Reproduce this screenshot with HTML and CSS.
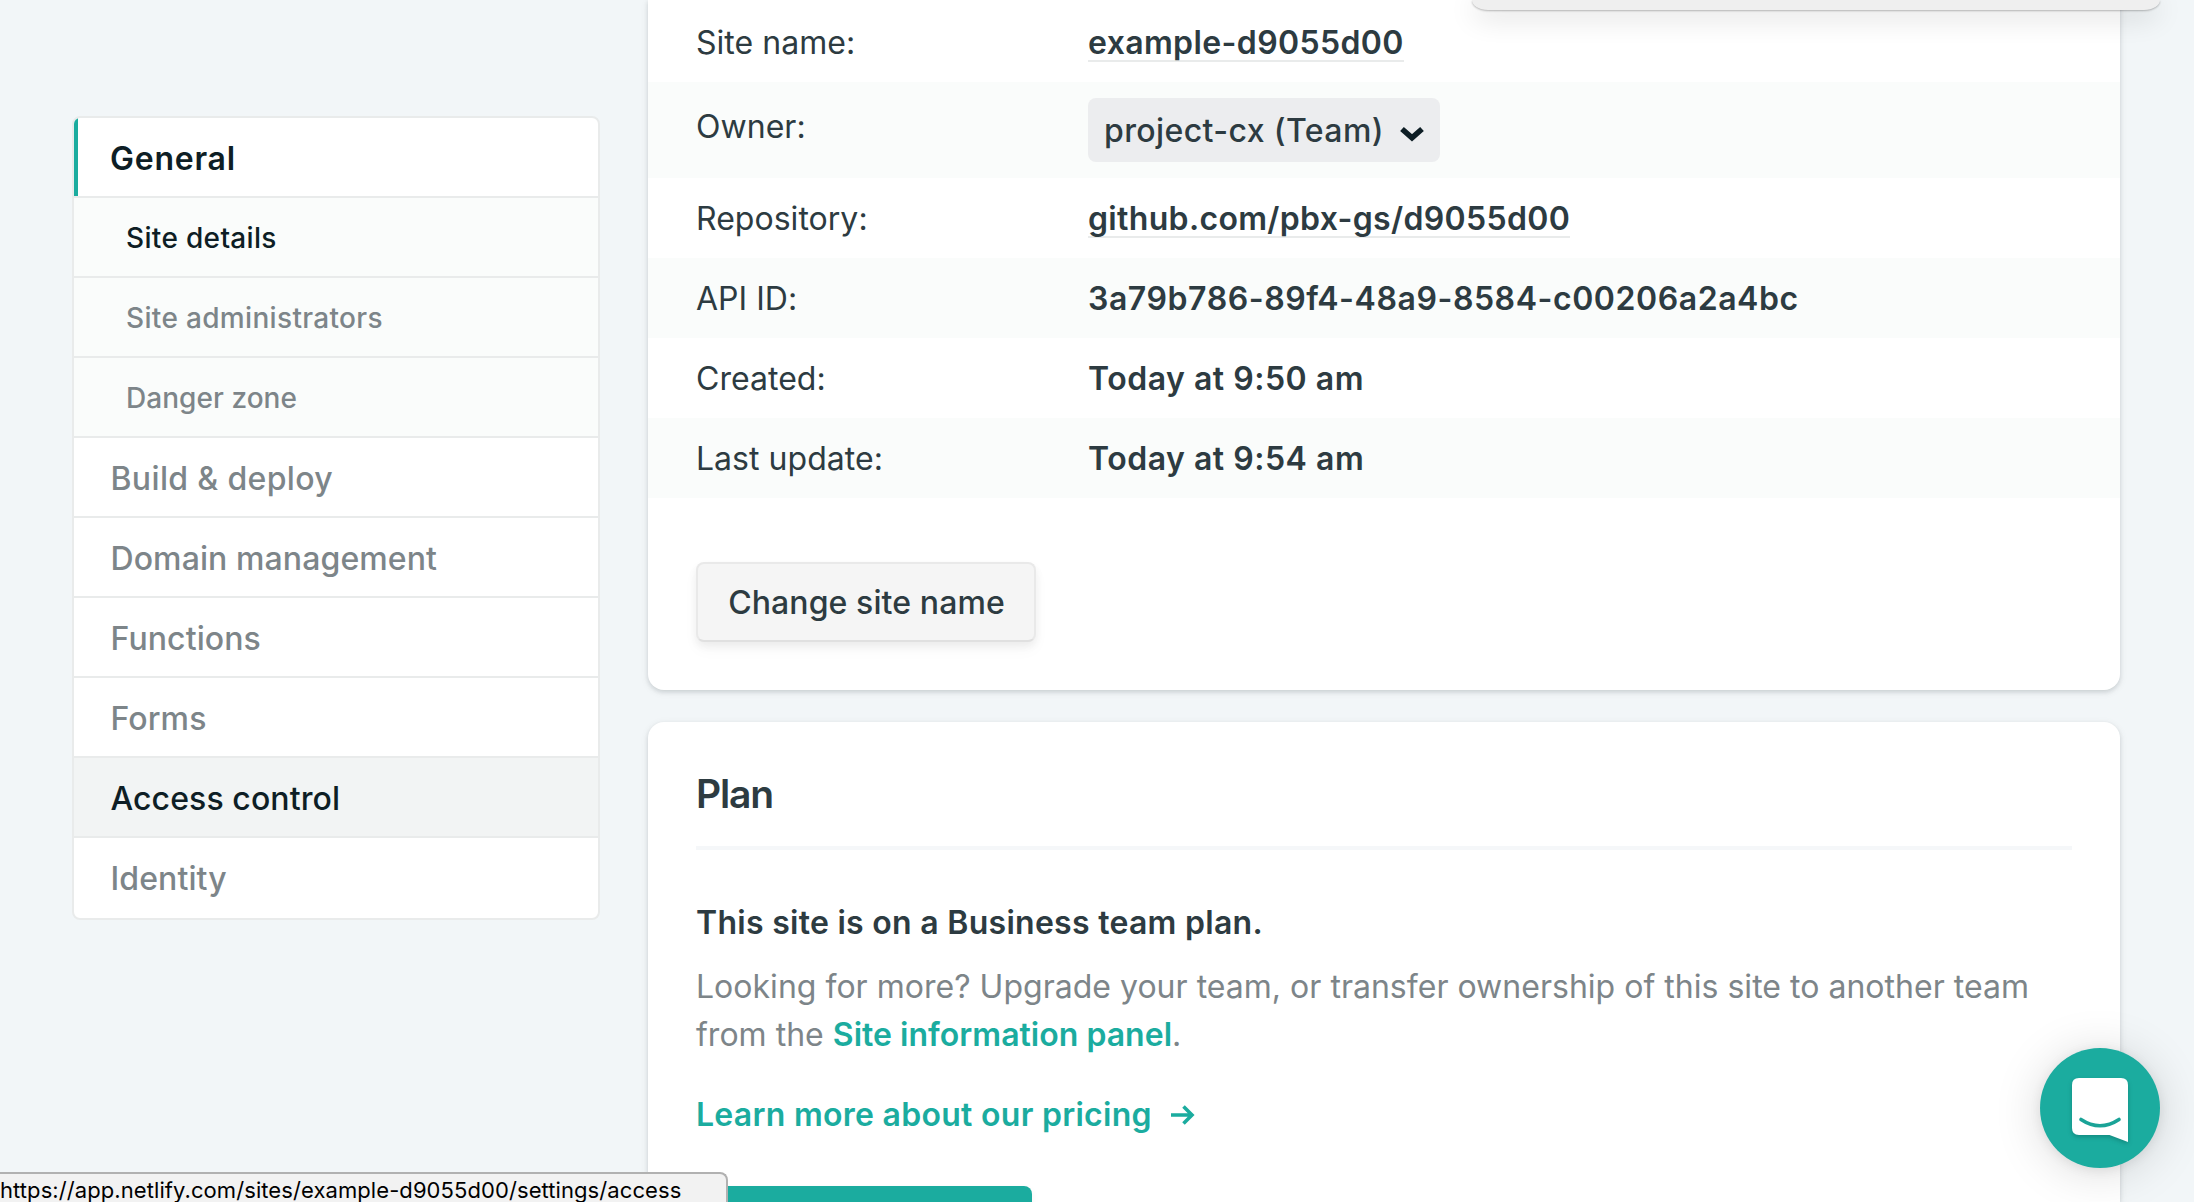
FILE: index.html
```html
<!DOCTYPE html>
<html lang="en">
<head>
<meta charset="utf-8">
<title>Site settings</title>
<link rel="stylesheet" href="styles.css">
</head>
<body>
<div class="page">
  <nav class="sidebar">
    <a class="nav-item nav-current">General</a>
    <a class="nav-item nav-sub nav-active">Site details</a>
    <a class="nav-item nav-sub">Site administrators</a>
    <a class="nav-item nav-sub nav-danger">Danger zone</a>
    <a class="nav-item nav-build">Build &amp; deploy</a>
    <a class="nav-item">Domain management</a>
    <a class="nav-item">Functions</a>
    <a class="nav-item">Forms</a>
    <a class="nav-item nav-hover">Access control</a>
    <a class="nav-item">Identity</a>
  </nav>
  <main class="content">
    <section class="card card-details">
      <dl class="details">
        <div class="row"><dt>Site name:</dt><dd><a class="underlined">example-d9055d00</a></dd></div>
        <div class="row row-owner"><dt>Owner:</dt><dd><button class="select"><span>project-cx (Team)</span><svg class="chevron" width="24" height="16" viewBox="0 0 24 16"><path d="M2 3 L12 11.8 L22 3" fill="none" stroke="#0e1e25" stroke-width="5.6"/></svg></button></dd></div>
        <div class="row"><dt>Repository:</dt><dd><a class="underlined repo">github.com/pbx-gs/d9055d00</a></dd></div>
        <div class="row"><dt>API ID:</dt><dd class="api-id">3a79b786-89f4-48a9-8584-c00206a2a4bc</dd></div>
        <div class="row"><dt>Created:</dt><dd>Today at 9:50 am</dd></div>
        <div class="row"><dt>Last update:</dt><dd>Today at 9:54 am</dd></div>
      </dl>
      <button class="btn">Change site name</button>
    </section>
    <section class="card card-plan">
      <h2 class="card-title">Plan</h2>
      <p class="plan-name">This site is on a Business team plan.</p>
      <p class="plan-text">Looking for more? Upgrade your team, or transfer ownership of this site to another team<br>from the <a class="link">Site information panel</a>.</p>
      <a class="link learn">Learn more about our pricing<svg class="arrow" width="26" height="22" viewBox="0 0 26 22"><path d="M1 11 H22 M13.5 2.5 L22 11 L13.5 19.5" fill="none" stroke="#1bac9f" stroke-width="3.6"/></svg></a>
      <button class="btn-primary" aria-label="Change plan"></button>
    </section>
  </main>
</div>
<div class="popover"></div>
<div class="status">https://app.netlify.com/sites/example-d9055d00/settings/access</div>
<button class="chat" aria-label="Chat">
  <svg width="120" height="120" viewBox="0 0 120 120">
    <path class="chat-bubble" d="M39 30 H81 Q88 30 88 37 V94 L69.500 87 H39 Q32 87 32 80 V37 Q32 30 39 30 Z" fill="#fff"/>
    <path d="M41 71.500 Q60 84 79 71.500" fill="none" stroke="#1aa397" stroke-width="3.600" stroke-linecap="round"/>
  </svg>
</button>
</body>
</html>
```
FILE: styles.css
```css
* { box-sizing: border-box; }
body {
  margin: 0;
  height: 1202px;
  overflow: hidden;
  background: #f2f6f8;
  color: #2d3b41;
  font: 400 32px/48px Inter, "Liberation Sans", sans-serif;
}
button { font: inherit; color: inherit; border: 0; margin: 0; }
.page {
  display: grid;
  grid-template-columns: 528px 1472px;
  column-gap: 48px;
  padding-left: 72px;
  align-items: start;
}
.sidebar {
  margin-top: 116px;
  border: 2px solid #e9ebeb;
  border-radius: 8px;
  background: #fff;
  overflow: hidden;
}
.nav-item {
  display: flex;
  align-items: center;
  height: 80px;
  padding: 3px 0 0 36.5px;
  border-bottom: 2px solid #e9ebeb;
  color: #7d8589;
  font-weight: 500;
  letter-spacing: 0.1px;
}
.nav-item:last-child { border-bottom-color: transparent; }
.nav-item.nav-current {
  padding-left: 36px;
  color: #0e1e25;
  font-weight: 600;
  letter-spacing: 0.75px;
  box-shadow: inset 4px 0 #1bac9f;
}
.nav-item.nav-sub {
  padding: 1px 0 0 52px;
  font-size: 28px;
  letter-spacing: 0.33px;
  background: #fafcfb;
}
.nav-item.nav-danger { letter-spacing: 0.05px; }
.nav-build { letter-spacing: 0.35px; }
.nav-active, .nav-hover { color: #0e1e25; }
.nav-hover { background: #f2f4f4; }

.content { display: flex; flex-direction: column; gap: 32px; }
.card {
  background: #fff;
  border-radius: 16px;
  box-shadow: 0 2px 4px rgba(14, 30, 37, 0.12), 0 2px 8px rgba(14, 30, 37, 0.08);
}
.card-details {
  padding: 2px 0 48px;
  border-radius: 0 0 16px 16px;
}
.details { margin: 0 0 64px; }
.row { display: flex; align-items: center; height: 80px; padding: 2px 0 0 48px; }
.row:nth-child(even) { background: #fafcfb; }
.row-owner { height: 96px; padding-top: 0; }
.row-owner dt { padding-bottom: 6px; }
dt { width: 392px; letter-spacing: 0.03px; }
dd { margin: 0; font-weight: 600; letter-spacing: 0.52px; display: flex; }
.underlined { line-height: 34px; letter-spacing: 0.38px; box-shadow: 0 2px #e9ebeb; }
.repo { letter-spacing: 0.33px; }
.api-id { letter-spacing: 0.56px; }
.select {
  display: flex;
  align-items: center;
  justify-content: space-between;
  width: 352px;
  height: 64px;
  padding: 2px 16px 0 16px;
  border-radius: 8px;
  background: #ecedef;
  font-weight: 500;
  letter-spacing: 0.4px;
}
.chevron { margin-top: 6px; }
.btn {
  display: block;
  width: 340px;
  height: 80px;
  margin-left: 48px;
  padding: 2px 0 0 1px;
  border: 2px solid #e9e9e9;
  border-bottom-color: #e0e0e0;
  border-radius: 8px;
  background: #f5f5f5;
  font-weight: 500;
  letter-spacing: 0.1px;
  box-shadow: 0 4px 8px rgba(0, 0, 0, 0.06), 0 8px 16px rgba(0, 0, 0, 0.03);
}
.card-plan {
  display: flex;
  flex-direction: column;
  align-items: flex-start;
  padding: 48px 48px 0;
  border-radius: 16px 16px 0 0;
}
.card-title {
  align-self: stretch;
  margin: 0 0 49px;
  padding-bottom: 28px;
  border-bottom: 4px solid #f5f7f9;
  font-size: 39px;
  font-weight: 600;
  letter-spacing: -1.2px;
}
.plan-name { margin: 0 0 16px; font-weight: 600; letter-spacing: 0.28px; }
.plan-text { margin: 0 0 32px; color: #7d8589; white-space: nowrap; letter-spacing: 0.02px; }
.link { color: #1bac9f; font-weight: 600; }
.learn { display: flex; align-items: center; letter-spacing: 0.27px; }
.arrow { margin-left: 18px; }
.btn-primary {
  width: 336px;
  height: 16px;
  margin-top: 47px;
  padding: 0;
  border-radius: 8px 8px 0 0;
  background: #1bac9f;
  box-shadow: 0 4px 8px rgba(0, 0, 0, 0.06);
}

/* Elements floating over the page */
.popover {
  position: absolute;
  top: 0;
  left: 1472px;
  width: 688px;
  height: 10px;
  border-radius: 0 0 16px 16px / 0 0 10px 10px;
  background: #efefef;
  box-shadow: 0 1px 2px rgba(0, 0, 0, 0.25), 0 6px 28px rgba(0, 0, 0, 0.2);
}
.status {
  position: absolute;
  left: 0;
  bottom: 0;
  width: 728px;
  height: 30px;
  overflow: hidden;
  border: solid #b1b1b1;
  border-width: 2px 2px 0 0;
  border-radius: 0 8px 0 0;
  background: #f2f2f2;
  color: #000;
  font-size: 22px;
  line-height: 32px;
  letter-spacing: 0.08px;
  white-space: nowrap;
}
.chat {
  position: absolute;
  left: 2040px;
  top: 1048px;
  width: 120px;
  height: 120px;
  padding: 0;
  border-radius: 50%;
  background: #1bac9f;
  box-shadow: 0 2px 12px rgba(0, 0, 0, 0.08), 0 4px 48px rgba(0, 0, 0, 0.15);
}
.chat svg { display: block; }
.chat-bubble { filter: drop-shadow(0 2px 2px rgba(0, 60, 55, 0.3)); }
```
